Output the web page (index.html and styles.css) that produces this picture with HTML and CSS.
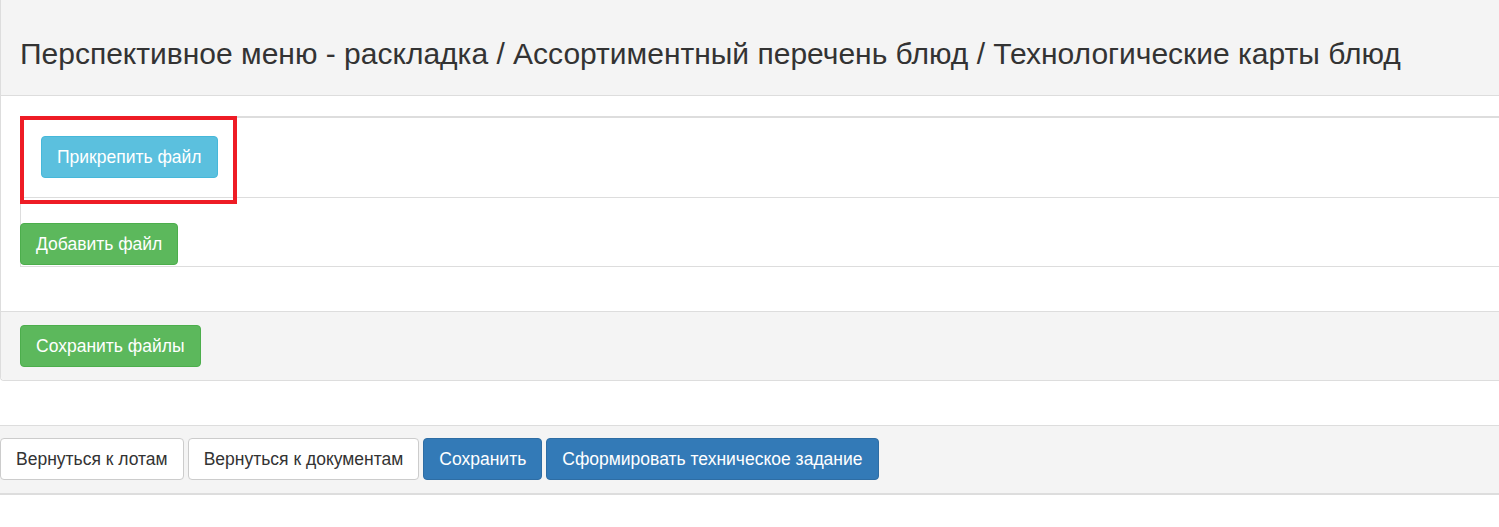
FILE: index.html
```html
<!DOCTYPE html>
<html lang="ru">
<head>
<meta charset="utf-8">
<title>Технологические карты блюд</title>
<link rel="stylesheet" href="styles.css">
</head>
<body>
<div class="panel">
  <div class="panel-heading">
    <h3 class="panel-title">Перспективное меню - раскладка / Ассортиментный перечень блюд / Технологические карты блюд</h3>
  </div>
  <div class="panel-body">
    <div class="files">
      <div class="file-row attach">
        <button class="btn btn-info">Прикрепить файл</button>
        <div class="highlight"></div>
      </div>
      <div class="file-row add">
        <button class="btn btn-success">Добавить файл</button>
      </div>
    </div>
  </div>
  <div class="panel-footer">
    <button class="btn btn-success">Сохранить файлы</button>
  </div>
</div>
<div class="actions">
  <button class="btn btn-default">Вернуться к лотам</button>
  <button class="btn btn-default">Вернуться к документам</button>
  <button class="btn btn-primary">Сохранить</button>
  <button class="btn btn-primary">Сформировать техническое задание</button>
</div>
</body>
</html>
```

FILE: styles.css
```css
* { box-sizing: border-box; }
html, body { margin: 0; padding: 0; }
body {
  font-family: "Liberation Sans", Arial, Helvetica, sans-serif;
  font-size: 17.5px;
  color: #333;
  background: #fff;
  overflow: hidden;
}
.panel {
  border-left: 1px solid #ddd;
  border-bottom: 1px solid #ddd;
  border-bottom-left-radius: 4px;
}
.panel-heading {
  background: #f4f4f4;
  height: 96px;
  border-bottom: 1px solid #ddd;
  padding: 0 19px;
  display: flex;
  align-items: center;
}
.panel-title {
  margin: 0;
  padding-top: 12px;
  font-size: 30px;
  font-weight: normal;
  color: #333;
  white-space: nowrap;
}
.panel-body {
  padding: 20px 0 44px 19px;
}
.files {
  border-top: 2px solid #ddd;
  border-left: 1px solid #ddd;
  border-bottom: 1px solid #ddd;
}
.file-row { position: relative; }
.file-row.attach {
  height: 80px;
  padding: 18px 0 0 20px;
  border-bottom: 1px solid #ddd;
}
.file-row.add {
  height: 68px;
  padding: 25px 0 0 0;
}
.file-row.add .btn { margin-left: -1px; }
.highlight {
  position: absolute;
  left: -1px;
  top: -2px;
  width: 217px;
  height: 88px;
  border: 4px solid #ee1c25;
  pointer-events: none;
}
.panel-footer {
  background: #f4f4f4;
  border-top: 1px solid #ddd;
  padding: 13px 19px 13px 19px;
  border-bottom-left-radius: 4px;
}
.actions {
  margin-top: 44px;
  background: #f4f4f4;
  border-top: 1px solid #ddd;
  border-bottom: 2px solid #ddd;
  padding: 12px 0 13px 0;
  display: flex;
  gap: 4px;
}
.btn {
  font-family: inherit;
  font-size: 17.5px;
  line-height: 22px;
  height: 42px;
  padding: 9px 15px;
  border: 1px solid transparent;
  border-radius: 4px;
  cursor: pointer;
  white-space: nowrap;
}
.btn-info { background: #5bc0de; border-color: #46b8da; color: #fff; }
.btn-success { background: #5cb85c; border-color: #4cae4c; color: #fff; }
.btn-primary { background: #337ab7; border-color: #2e6da4; color: #fff; }
.btn-default { background: #fff; border-color: #ccc; color: #333; }
```
